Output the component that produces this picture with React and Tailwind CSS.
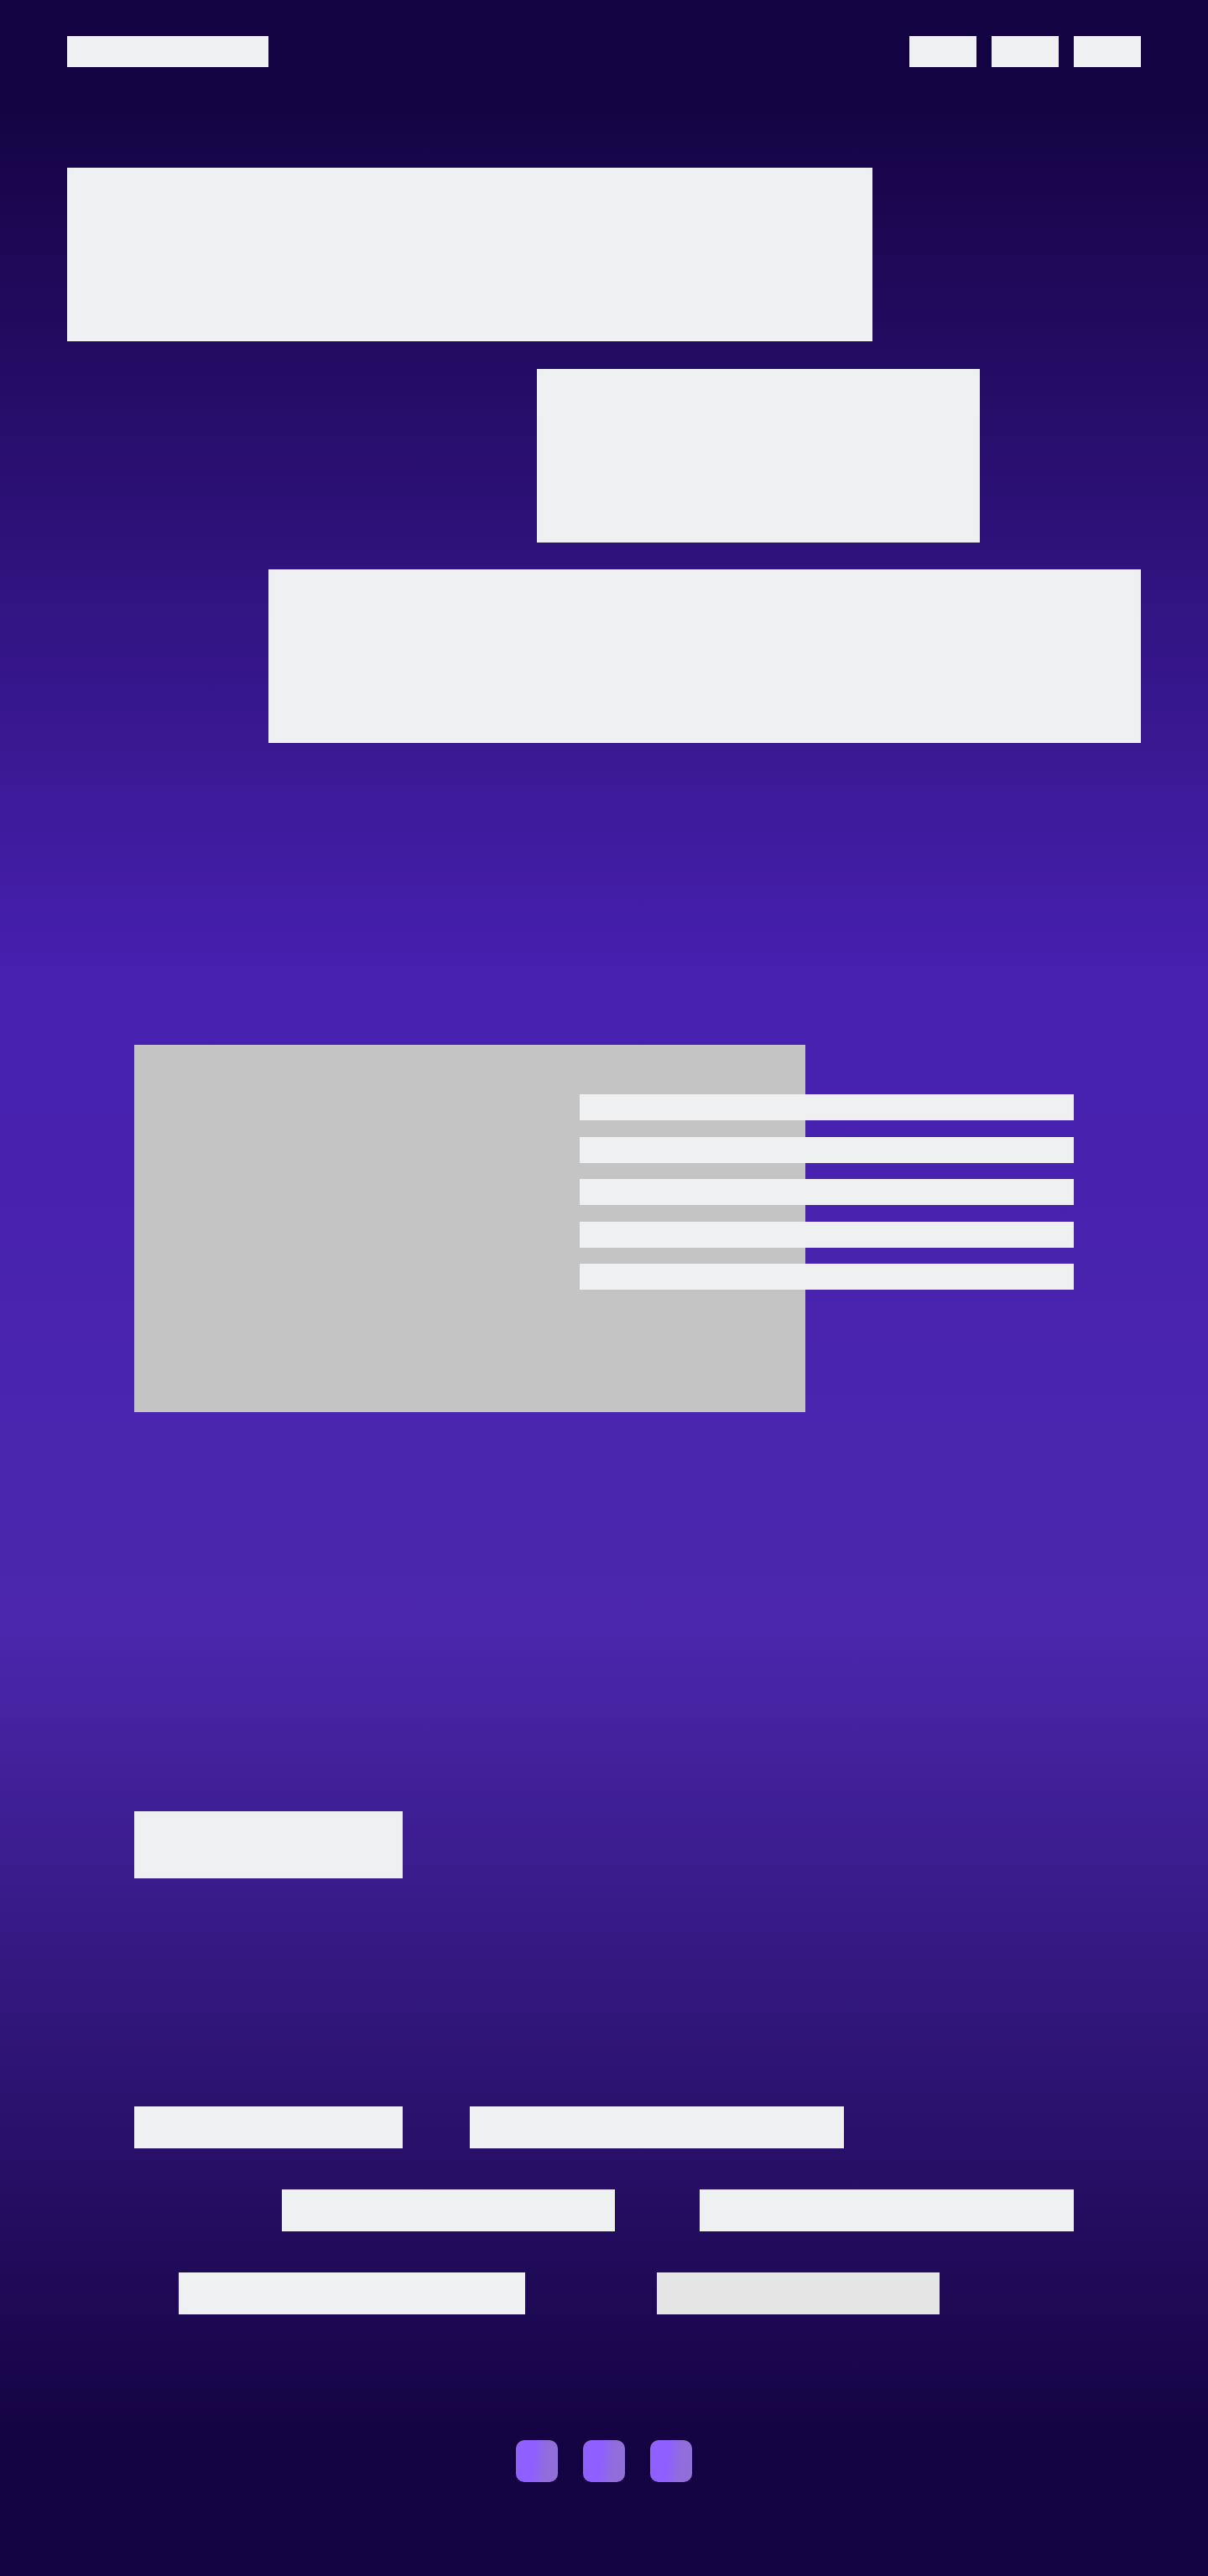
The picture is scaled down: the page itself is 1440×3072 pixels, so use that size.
const BLOCK = "bg-[#eff0f2]";

function Header() {
  return (
    <header className="flex items-center justify-between">
      <div className={`h-[37px] w-60 ${BLOCK}`} />
      <nav aria-label="Main" className="flex gap-[18px]">
        <a href="#feature" aria-label="Feature" className={`h-[37px] w-20 ${BLOCK}`} />
        <a href="#action" aria-label="Action" className={`h-[37px] w-20 ${BLOCK}`} />
        <a href="#partners" aria-label="Partners" className={`h-[37px] w-20 ${BLOCK}`} />
      </nav>
    </header>
  );
}

function Hero() {
  return (
    <section className="mt-[120px] grid h-[686px] content-between">
      <div className={`h-[207px] w-3/4 ${BLOCK}`} />
      <div className={`ml-[43.75%] h-[207px] w-[41.25%] ${BLOCK}`} />
      <div className={`h-[207px] w-[81.25%] justify-self-end ${BLOCK}`} />
    </section>
  );
}

function Feature() {
  return (
    <section id="feature" className="mx-20 mt-[360px] grid grid-cols-[531fr_269fr_320fr]">
      <div className="col-start-1 col-end-3 row-start-1 h-[438px] bg-[#c4c4c4]" />
      <div className="z-10 col-start-2 col-end-4 row-start-1 mt-[59px] grid h-[233px] content-between">
        <div className={`h-[31px] ${BLOCK}`} />
        <div className={`h-[31px] ${BLOCK}`} />
        <div className={`h-[31px] ${BLOCK}`} />
        <div className={`h-[31px] ${BLOCK}`} />
        <div className={`h-[31px] ${BLOCK}`} />
      </div>
    </section>
  );
}

function Partners() {
  return (
    <section id="partners" className="mx-20 mt-[272px] flex flex-col gap-[49px]">
      <div className="grid h-[50px] grid-cols-[320fr_80fr_446fr_274fr]">
        <div className={BLOCK} />
        <div className={`col-start-3 ${BLOCK}`} />
      </div>
      <div className="grid h-[50px] grid-cols-[176fr_397fr_101fr_446fr]">
        <div className={`col-start-2 ${BLOCK}`} />
        <div className={`col-start-4 ${BLOCK}`} />
      </div>
      <div className="grid h-[50px] grid-cols-[53fr_413fr_157fr_337fr_160fr]">
        <div className={`col-start-2 ${BLOCK}`} />
        <div className="col-start-4 bg-[#e5e5e5]" />
      </div>
    </section>
  );
}

function SocialLink({ name }) {
  return (
    <a
      href={`#${name}`}
      aria-label={name}
      className="size-[50px] rounded-[10px] bg-[linear-gradient(96deg,#8f5fff_40%,#906bdf_66%,#9072d5_100%)]"
    />
  );
}

export default function App() {
  return (
    <div className="bg-[linear-gradient(180deg,#140342_3.5%,#4720b0_38%,#4b27ad_63%,#140342_95%)] px-20 pt-[43px] pb-28">
      <Header />
      <main>
        <Hero />
        <Feature />
        <button id="action" type="button" aria-label="Continue" className={`mt-[476px] ml-20 block h-20 w-80 ${BLOCK}`} />
        <Partners />
      </main>
      <footer className="mt-[150px] flex justify-center gap-[30px]">
        <SocialLink name="first" />
        <SocialLink name="second" />
        <SocialLink name="third" />
      </footer>
    </div>
  );
}
